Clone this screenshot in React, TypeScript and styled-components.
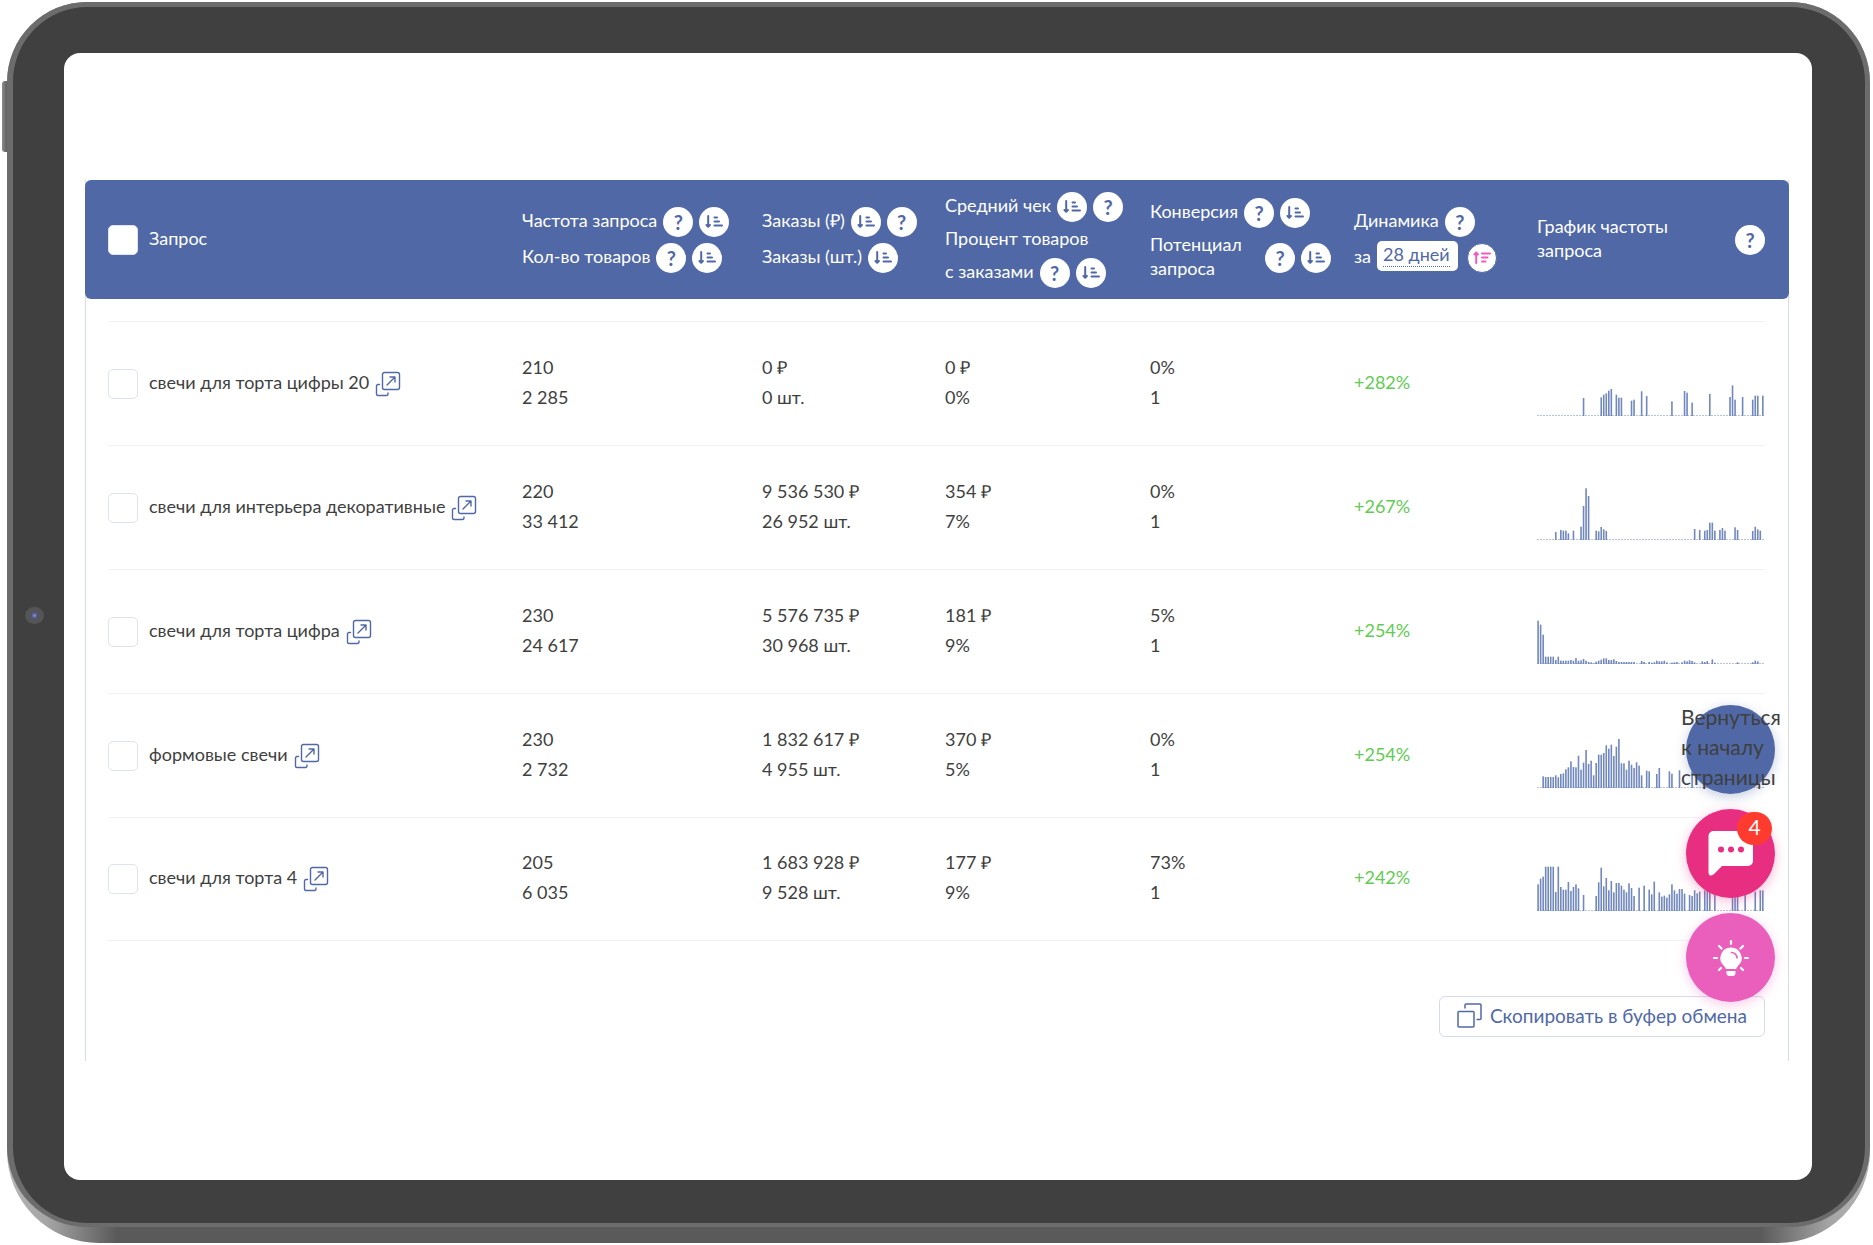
import React from 'react';
import styled, { createGlobalStyle } from 'styled-components';

const BLUE = '#5068a6';

const GlobalStyle = createGlobalStyle`
  *, *::before, *::after { box-sizing: border-box; }
  body { margin: 0; background: #fff; }
  button { font: inherit; cursor: pointer; }
`;

const Page = styled.main`
  position: relative;
  display: flex;
  min-height: 100vh;
  padding: 2px 3px 2px 7px;
  font-family: Lato, Carlito, "Open Sans", sans-serif;
  color: #3f3f3f;
`;

const SideButton = styled.span`
  position: absolute;
  left: 2px;
  top: 81px;
  width: 6px;
  height: 71px;
  border-radius: 3px 0 0 3px;
  background: linear-gradient(90deg, #8d8d8d, #555);
`;

const Chassis = styled.div`
  position: relative;
  display: flex;
  flex: 1;
  padding-bottom: 16px;
  border-radius: 80px 80px 92px 92px;
  background: linear-gradient(90deg, #b5b5b5 0, #a5a5a5 40px, #5a5a5a 110px, #5a5a5a calc(100% - 110px), #a5a5a5 calc(100% - 40px), #b5b5b5 100%);
`;

const Face = styled.div`
  position: relative;
  display: flex;
  flex: 1;
  padding: 46px 53px 43px 51px;
  border: solid #6c6c6c;
  border-width: 5px 5px 4px 6px;
  border-radius: 80px;
  background: #404040;
`;

const Camera = styled.span`
  position: absolute;
  left: 12px;
  top: 600px;
  width: 19px;
  height: 17px;
  border-radius: 50%;
  background: radial-gradient(circle at 50% 50%, #8f93c4 0, #4d5280 3px, #555 5px, #555 100%);
`;

const Screen = styled.div`
  position: relative;
  flex: 1;
  min-width: 0;
  padding: 127px 23px 118px 21px;
  border-radius: 16px;
  background: #fff;
`;

const Card = styled.section`
  padding-bottom: 24px;
  background: linear-gradient(#d5dbea, #d5dbea) left / 1px 100% no-repeat,
    linear-gradient(#d5dbea, #d5dbea) right / 1px 100% no-repeat;
`;

const Table = styled.table`
  display: block;
  width: 100%;
`;

const columns = `
  display: grid;
  grid-template-columns: 414fr 240fr 183fr 205fr 204fr 183fr 228fr;
  align-items: center;
`;

const Head = styled.thead`
  display: block;
  border-radius: 6px;
  background: ${BLUE};
  color: #fff;
`;

const HeadRow = styled.tr`
  ${columns}
  min-height: 119px;
  padding: 0 24px 0 23px;
`;

const HeadCell = styled.th`
  display: flex;
  flex-direction: column;
  gap: 6px;
  min-width: 0;
  padding: 0;
  font-size: 18px;
  line-height: 24px;
  font-weight: 400;
  text-align: left;
`;

const HeadLine = styled.div<{ $spread?: boolean }>`
  display: flex;
  align-items: center;
  gap: 6px;
  ${(p) => (p.$spread ? 'justify-content: space-between;' : '')}
`;

const Label = styled.span<{ $narrow?: boolean }>`
  margin-top: -2px;
  padding-bottom: 2px;
  ${(p) => (p.$narrow ? 'width: 109px;' : '')}
`;

const Round = styled.button<{ $active?: boolean }>`
  display: flex;
  flex: none;
  align-items: center;
  justify-content: center;
  width: 30px;
  height: 30px;
  padding: 0;
  border: ${(p) => (p.$active ? `1px solid ${BLUE}` : '0')};
  border-radius: 50%;
  background: #fff;
  color: ${(p) => (p.$active ? '#ee5dbd' : BLUE)};
  font-size: 20px;
  line-height: 24px;
  font-weight: 700;
`;

const Period = styled.button`
  height: 30px;
  margin: -4px 3px 0 0;
  padding: 0 8px 2px 6px;
  border: 0;
  border-radius: 5px;
  background: #fff;
  color: ${BLUE};
  line-height: 24px;
`;

const PeriodText = styled.span`
  display: block;
  border-bottom: 1px dotted ${BLUE};
`;

const Check = styled.input`
  appearance: none;
  flex: none;
  width: 30px;
  height: 30px;
  margin: 0;
  border: 1px solid #dfe3ef;
  border-radius: 5px;
  background: #fff;
`;

const CheckLabel = styled.label`
  display: flex;
  align-items: center;
  gap: 11px;
`;

const Body = styled.tbody`
  display: block;
  padding: 22px 24px 0 23px;
`;

const Row = styled.tr`
  ${columns}
  min-height: 124px;
  border-top: 1px solid #f1f2f4;
  &:last-child { border-bottom: 1px solid #f1f2f4; }
`;

const Cell = styled.td<{ $good?: boolean }>`
  padding: 0 0 4px;
  min-width: 0;
  font-size: 18px;
  line-height: 30px;
  color: ${(p) => (p.$good ? '#62cb52' : 'inherit')};
`;

const QueryCell = styled(Cell)`
  display: flex;
  align-items: center;
  gap: 6px;
  padding: 0;
`;

const QueryText = styled.span`
  padding-bottom: 4px;
`;

const ChartCell = styled(Cell)`
  padding: 0 0 2px;
`;

const OpenLink = styled.a`
  display: flex;
  color: ${BLUE};
`;

const Actions = styled.div`
  display: flex;
  justify-content: flex-end;
  padding: 55px 24px 0 0;
`;

const CopyButton = styled.button`
  display: flex;
  align-items: center;
  gap: 8px;
  height: 41px;
  padding: 0 17px 2px;
  border: 1px solid #d5dbea;
  border-radius: 6px;
  background: #fff;
  color: ${BLUE};
  font-size: 19px;
  line-height: 24px;
`;

const Floating = styled.div`
  position: absolute;
  right: 37px;
  bottom: 178px;
  display: flex;
  flex-direction: column;
  gap: 15px;
`;

const Bubble = styled.button<{ $color: string }>`
  position: relative;
  display: flex;
  align-items: center;
  justify-content: center;
  width: 89px;
  height: 89px;
  padding: 0;
  border: 0;
  border-radius: 50%;
  background: ${(p) => p.$color};
  box-shadow: 0 3px 12px ${(p) => p.$color}55;
  color: #3f3f3f;
`;

const BubbleText = styled.span`
  position: absolute;
  left: -5px;
  top: -3px;
  font-size: 21px;
  line-height: 30px;
  text-align: left;
`;

const Badge = styled.span`
  position: absolute;
  right: 3px;
  top: 3px;
  width: 35px;
  height: 33px;
  border-radius: 17px;
  background: #ff3b30;
  color: #fff;
  font-size: 21px;
  line-height: 30px;
`;

const Sort = ({ up }: { up?: boolean }) => (
  <svg width="18" height="13" viewBox="0 0 18 13" fill="none" stroke="currentColor" strokeWidth="2" strokeLinecap="round" strokeLinejoin="round" aria-label="Сортировать">
    {up ? (
      <path d="M3.200 12V2M1.500 3.500l1.700-2 1.700 2M9 2.500h8M9 6.500h5.500M9 10.500h3.500" />
    ) : (
      <path d="M3.200 1v10M1.500 10l1.700 1.800L4.900 10M9.500 2.500h2.500M9.500 6.500h4.500M9.500 10.500h7.500" />
    )}
  </svg>
);

const Help = () => <Round type="button">?</Round>;
const SortButton = ({ up }: { up?: boolean }) => (
  <Round type="button" $active={up}><Sort up={up} /></Round>
);

const OpenIcon = () => (
  <svg width="26" height="26" viewBox="0 0 26 26" fill="none" stroke="currentColor" strokeWidth="1.4" strokeLinecap="round" strokeLinejoin="round">
    <rect x="7.500" y="1.500" width="17" height="17" rx="2" />
    <path d="M12 14 20 6M15 6h5v5M4.500 13.500H3A1.500 1.500 0 0 0 1.500 15v8A1.500 1.500 0 0 0 3 24.500h8.500A1.500 1.500 0 0 0 13 23v-1" />
  </svg>
);

const CopyIcon = () => (
  <svg width="25" height="25" viewBox="0 0 25 25" fill="none" stroke="currentColor" strokeWidth="1.500" strokeLinejoin="round">
    <rect x="1" y="8.500" width="16" height="15.500" rx="1" />
    <path d="M8 5.500V2a1 1 0 0 1 1-1h14a1 1 0 0 1 1 1v13.500a1 1 0 0 1-1 1h-3.500" />
  </svg>
);

const ChatIcon = () => (
  <svg width="46" height="46" viewBox="0 0 46 46">
    <path d="M6 0h34a5 5 0 0 1 5 5v25a5 5 0 0 1-5 5H14L5.500 43.500Q0.500 46.500 0.500 41V5a5 5 0 0 1 5.500-5Z" fill="#fff" />
    <g fill="#e82e80"><circle cx="13" cy="18.500" r="3" /><circle cx="23" cy="18.500" r="3" /><circle cx="33" cy="18.500" r="3" /></g>
  </svg>
);

const BulbIcon = () => (
  <svg width="36" height="36" viewBox="0 0 36 36" fill="none" strokeLinecap="round">
    <path d="M18 7.500a10.500 10.500 0 0 1 7 18.400Q23.500 27.300 23 29H13q-.5-1.700-2-3.100A10.500 10.500 0 0 1 18 7.500Z" fill="#fff" />
    <path d="M13.500 31h9v2q0 3-3 3h-3q-3 0-3-3Z" fill="#fff" />
    <path d="M18.500 12.500a5.500 5.500 0 0 1 5.500 5.500" stroke="#eb5fbc" strokeWidth="1.600" />
    <path d="M18 1v3M1 18h3M32 18h3M6 6l2.500 2.500M30 6l-2.500 2.500M6 30l2-2M30 30l-2-2" stroke="#fff" strokeWidth="2.200" />
  </svg>
);

const Chart = styled.svg`
  display: block;
  width: 100%;
  height: 66px;
`;

const Sparkline = ({ data }: { data: number[] }) => (
  <Chart viewBox="0 0 228 66" preserveAspectRatio="none" role="img" aria-label="График частоты запроса">
    <path d="M0 65.500H227" stroke="#b9c3de" strokeWidth="1" strokeDasharray="2 1" />
    {data.map((v, i) => (v ? <rect key={i} x={0.3 + i * 2.525} y={66 - v / 3} width="1.600" height={v / 3} fill="#7188be" /> : null))}
  </Chart>
);

const pad = (n: number) => Array<number>(n).fill(0);

type Query = { name: string; freq: string[]; orders: string[]; check: string[]; conv: string[]; growth: string; bars: number[] };

const queries: Query[] = [
  {
    name: 'свечи для торта цифры 20', freq: ['210', '2 285'], orders: ['0 ₽', '0 шт.'], check: ['0 ₽', '0%'], conv: ['0%', '1'], growth: '+282%',
    bars: [...pad(18), 54, ...pad(6), 56, 64, 68, 76, 81, 0, 64, 55, 55, 0, 0, 0, 46, 49, 0, 0, 74, 0, 60, ...pad(9), 44, 0, 0, 0, 0, 75, 70, 0, 40, ...pad(6), 66, ...pad(7), 57, 92, 49, 0, 0, 57, 0, 0, 0, 49, 61, 61, 0, 61],
  },
  {
    name: 'свечи для интерьера декоративные', freq: ['220', '33 412'], orders: ['9 536 530 ₽', '26 952 шт.'], check: ['354 ₽', '7%'], conv: ['0%', '1'], growth: '+267%',
    bars: [...pad(7), 24, 0, 30, 28, 28, 20, 0, 28, 0, 0, 40, 102, 155, 132, 0, 0, 28, 26, 39, 32, 27, ...pad(34), 33, 0, 30, 0, 28, 30, 52, 52, 28, 0, 30, 36, 28, 0, 0, 0, 38, 30, ...pad(5), 27, 40, 32, 28, 0],
  },
  {
    name: 'свечи для торта цифра', freq: ['230', '24 617'], orders: ['5 576 735 ₽', '30 968 шт.'], check: ['181 ₽', '9%'], conv: ['5%', '1'], growth: '+254%',
    bars: [130, 118, 88, 22, 22, 22, 22, 12, 22, 10, 10, 10, 10, 12, 10, 18, 10, 11, 15, 10, 6, 5, 2, 7, 10, 13, 17, 17, 12, 12, 14, 9, 6, 6, 6, 6, 6, 6, 6, 0, 0, 9, 6, 0, 6, 4, 5, 10, 8, 8, 10, 5, 0, 4, 5, 6, 0, 5, 10, 8, 11, 9, 5, 0, 0, 8, 6, 9, 0, 14, 4, ...pad(8), 5, ...pad(5), 5, 10, 8, 0, 0],
  },
  {
    name: 'формовые свечи', freq: ['230', '2 732'], orders: ['1 832 617 ₽', '4 955 шт.'], check: ['370 ₽', '5%'], conv: ['0%', '1'], growth: '+254%',
    bars: [0, 0, 35, 33, 33, 33, 33, 38, 32, 42, 44, 56, 62, 80, 63, 62, 97, 55, 76, 114, 72, 82, 38, 75, 100, 100, 105, 128, 118, 130, 96, 124, 147, 74, 74, 55, 82, 70, 60, 77, 67, 38, 0, 52, 50, 0, 0, 42, 60, 0, 0, 0, 50, 43, 0, 0, 53, 0, 0, 0, 0, 50, ...pad(28)],
  },
  {
    name: 'свечи для торта 4', freq: ['205', '6 035'], orders: ['1 683 928 ₽', '9 528 шт.'], check: ['177 ₽', '9%'], conv: ['73%', '1'], growth: '+242%',
    bars: [80, 97, 103, 133, 133, 133, 133, 57, 133, 72, 64, 64, 87, 60, 72, 80, 68, 0, 48, 0, 0, 0, 0, 45, 86, 130, 74, 99, 62, 90, 56, 84, 84, 76, 64, 56, 83, 69, 45, 0, 70, 0, 76, 0, 64, 50, 88, 0, 56, 43, 46, 40, 50, 80, 62, 52, 66, 66, 52, 0, 48, 45, 62, 53, 58, 0, 62, 62, 62, 0, 48, ...pad(6), 50, 50, 50, 0, 0, 50, 0, 0, 0, 58, 0, 62, 62],
  },
];

const Pair = ({ lines }: { lines: string[] }) => (
  <Cell>{lines.map((l) => <div key={l}>{l}</div>)}</Cell>
);

export default function App() {
  return (
    <>
      <GlobalStyle />
      <Page>
        <SideButton />
        <Chassis>
          <Face>
            <Camera />
            <Screen>
              <Card>
                <Table>
                  <Head>
                    <HeadRow>
                      <HeadCell><CheckLabel><Check type="checkbox" /><Label>Запрос</Label></CheckLabel></HeadCell>
                      <HeadCell>
                        <HeadLine><Label>Частота запроса</Label><Help /><SortButton /></HeadLine>
                        <HeadLine><Label>Кол-во товаров</Label><Help /><SortButton /></HeadLine>
                      </HeadCell>
                      <HeadCell>
                        <HeadLine><Label>Заказы (₽)</Label><SortButton /><Help /></HeadLine>
                        <HeadLine><Label>Заказы (шт.)</Label><SortButton /></HeadLine>
                      </HeadCell>
                      <HeadCell>
                        <HeadLine><Label>Средний чек</Label><SortButton /><Help /></HeadLine>
                        <HeadLine><Label>Процент товаров</Label></HeadLine>
                        <HeadLine><Label>с заказами</Label><Help /><SortButton /></HeadLine>
                      </HeadCell>
                      <HeadCell>
                        <HeadLine><Label>Конверсия</Label><Help /><SortButton /></HeadLine>
                        <HeadLine><Label $narrow>Потенциал запроса</Label><Help /><SortButton /></HeadLine>
                      </HeadCell>
                      <HeadCell>
                        <HeadLine><Label>Динамика</Label><Help /></HeadLine>
                        <HeadLine><Label>за</Label><Period type="button"><PeriodText>28 дней</PeriodText></Period><SortButton up /></HeadLine>
                      </HeadCell>
                      <HeadCell>
                        <HeadLine $spread><Label>График частоты<br />запроса</Label><Help /></HeadLine>
                      </HeadCell>
                    </HeadRow>
                  </Head>
                  <Body>
                    {queries.map((q) => (
                      <Row key={q.name}>
                        <QueryCell>
                          <CheckLabel><Check type="checkbox" /><QueryText>{q.name}</QueryText></CheckLabel>
                          <OpenLink href="#" aria-label={q.name}><OpenIcon /></OpenLink>
                        </QueryCell>
                        <Pair lines={q.freq} />
                        <Pair lines={q.orders} />
                        <Pair lines={q.check} />
                        <Pair lines={q.conv} />
                        <Cell $good>{q.growth}</Cell>
                        <ChartCell><Sparkline data={q.bars} /></ChartCell>
                      </Row>
                    ))}
                  </Body>
                </Table>
                <Actions>
                  <CopyButton type="button"><CopyIcon />Скопировать в буфер обмена</CopyButton>
                </Actions>
              </Card>
              <Floating>
                <Bubble type="button" $color="#5068a6"><BubbleText>Вернуться к началу страницы</BubbleText></Bubble>
                <Bubble type="button" $color="#e82e80"><ChatIcon /><Badge>4</Badge></Bubble>
                <Bubble type="button" $color="#eb5fbc"><BulbIcon /></Bubble>
              </Floating>
            </Screen>
          </Face>
        </Chassis>
      </Page>
    </>
  );
}
